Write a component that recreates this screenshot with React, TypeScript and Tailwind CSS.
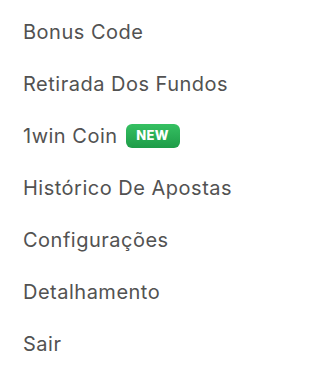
const items = [
  { label: 'Bonus Code' },
  { label: 'Retirada Dos Fundos' },
  { label: '1win Coin', badge: 'NEW' },
  { label: 'Histórico De Apostas' },
  { label: 'Configurações' },
  { label: 'Detalhamento' },
  { label: 'Sair' },
];

export default function App() {
  return (
    <div className="w-[252px] h-[375px] bg-white pt-[6px] font-['Inter',sans-serif]">
      <ul className="flex flex-col">
        {items.map((item) => (
          <li key={item.label} className="h-[52px] flex items-center pl-[23px] gap-[8px]">
            <span className="text-[20px] leading-none text-[#525252] tracking-[0.5px] whitespace-nowrap">{item.label}</span>
            {item.badge && (
              <span className="h-[24px] w-[54px] justify-center flex items-center rounded-[6px] bg-gradient-to-b from-[#35c062] to-[#1e9c48] text-white text-[13px] font-extrabold tracking-[0.3px]">
                {item.badge}
              </span>
            )}
          </li>
        ))}
      </ul>
    </div>
  );
}
